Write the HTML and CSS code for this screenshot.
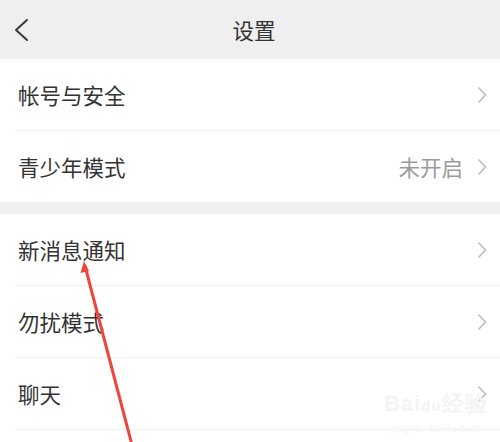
FILE: index.html
```html
<html>
    <head>
        <title>设置</title>
        <link rel="stylesheet" href="styles.css">
    </head>
    <body>
        <div id='settings-page'>
            <div class='top-bar'>
                <div class='back'>
                    <svg width="16" height="24" viewBox="0 0 16 24"><polyline points="13,2 2,12 13,22" fill="none" stroke="#3a3a3a" stroke-width="2" stroke-linecap="round" stroke-linejoin="round"/></svg>
                </div>
                <div class='title'>设置</div>
                <div class='spacer'></div>
            </div>

            <div class='group'>
                <div class='row'>
                    <span class='label'>帐号与安全</span>
                    <span class='chevron'><svg width="10" height="18" viewBox="0 0 10 18"><polyline points="1.5,1.5 8.5,9 1.5,16.5" fill="none" stroke="#bdbdbd" stroke-width="1.6"/></svg></span>
                </div>
                <div class='row'>
                    <span class='label'>青少年模式</span>
                    <span class='value'>未开启</span>
                    <span class='chevron'><svg width="10" height="18" viewBox="0 0 10 18"><polyline points="1.5,1.5 8.5,9 1.5,16.5" fill="none" stroke="#bdbdbd" stroke-width="1.6"/></svg></span>
                </div>
            </div>

            <div class='group'>
                <div class='row'>
                    <span class='label'>新消息通知</span>
                    <span class='chevron'><svg width="10" height="18" viewBox="0 0 10 18"><polyline points="1.5,1.5 8.5,9 1.5,16.5" fill="none" stroke="#bdbdbd" stroke-width="1.6"/></svg></span>
                </div>
                <div class='row'>
                    <span class='label'>勿扰模式</span>
                    <span class='chevron'><svg width="10" height="18" viewBox="0 0 10 18"><polyline points="1.5,1.5 8.5,9 1.5,16.5" fill="none" stroke="#bdbdbd" stroke-width="1.6"/></svg></span>
                </div>
                <div class='row'>
                    <span class='label'>聊天</span>
                    <span class='chevron'><svg width="10" height="18" viewBox="0 0 10 18"><polyline points="1.5,1.5 8.5,9 1.5,16.5" fill="none" stroke="#bdbdbd" stroke-width="1.6"/></svg></span>
                </div>
            </div>

            <!-- baidu jingyan watermark -->
            <div class='watermark'>
                <div class='wm-logo'>Bai<span class='wm-du'>du</span>经验</div>
                <div class='wm-url'>jingyan.baidu.com</div>
            </div>

            <!-- red pointer arrow -->
            <svg class='pointer' width="500" height="442" viewBox="0 0 500 442">
                <line x1="85" y1="266" x2="132" y2="445" stroke="#f0443a" stroke-width="3"/>
                <polygon points="84,261 80.5,273 89,271" fill="#f0443a"/>
            </svg>
        </div>
    </body>
</html>
```

FILE: styles.css
```css
body{
    margin: 0;
    background-color: #ffffff;
    font-family: "Noto Sans CJK SC", "Noto Sans", sans-serif;
    color: #333333;
}

#settings-page{
    width: 500px;
    height: 442px;
    overflow: hidden;
    position: relative;
    background-color: #ffffff;
}

.top-bar{
    height: 59px;
    background-color: #efefef;
    display: grid;
    grid-template-columns: 60px auto 60px;
    align-items: center;
}
.top-bar .back{
    padding-left: 14px;
    display: flex;
    align-items: center;
}
.top-bar .title{
    text-align: center;
    font-size: 21.5px;
    color: #333333;
    padding-left: 8px;
}

.group + .group{
    border-top: 12px solid #efefef;
}

.row{
    height: 71px;
    display: flex;
    align-items: center;
    padding: 0 13px 0 18px;
    position: relative;
}
.row::after{
    content: '';
    position: absolute;
    left: 15px;
    right: 0;
    bottom: -1px;
    height: 1px;
    background-color: #f0f0f0;
}
.row + .row{
    margin-top: 1px;
}
.group:first-of-type .row:last-child::after{
    display: none;
}

.label{
    flex: 1;
    font-size: 21.5px;
    color: #333333;
}
.value{
    font-size: 21.5px;
    color: #9a9a9a;
    margin-right: 14px;
}
.chevron{
    display: flex;
    align-items: center;
}

.watermark{
    position: absolute;
    left: 384px;
    top: 392px;
    color: #f4f4f4;
    font-family: "Liberation Sans", sans-serif;
    text-align: center;
}
.wm-logo{
    font-size: 22px;
    font-weight: bold;
    letter-spacing: 1px;
    line-height: 24px;
}
.wm-du{
    font-size: 15px;
}
.wm-url{
    font-size: 11px;
    margin-top: 4px;
}

.pointer{
    position: absolute;
    left: 0;
    top: 0;
}
```
